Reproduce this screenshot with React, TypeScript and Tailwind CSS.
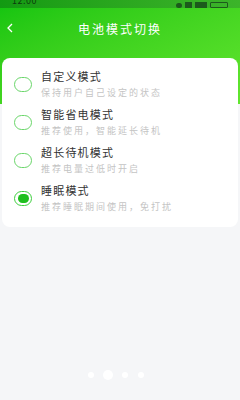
import React from 'react';

const modes = [
  { title: '自定义模式', desc: '保持用户自己设定的状态' },
  { title: '智能省电模式', desc: '推荐使用，智能延长待机' },
  { title: '超长待机模式', desc: '推荐电量过低时开启' },
  { title: '睡眠模式', desc: '推荐睡眠期间使用，免打扰' },
];

const Radio = ({ checked }: { checked: boolean }) => (
  <div
    className={`w-[18px] h-[15px] rounded-full flex items-center justify-center shrink-0 ${
      checked ? 'border-[1.5px] border-[#3fcf3f]' : 'border border-[#6ad66a]'
    }`}
  >
    {checked && <div className="w-[11px] h-[9px] rounded-full bg-[#1fbf1f]" />}
  </div>
);

export default function App() {
  const selected = 3;
  return (
    <div
      className="w-[240px] h-[400px] bg-[#f5f6f8] flex flex-col overflow-hidden"
      style={{ fontFamily: '"Noto Sans CJK SC", "Noto Sans", sans-serif' }}
    >
      {/* header */}
      <div className="h-[104px] bg-gradient-to-br from-[#0fc40f] to-[#62e62f] flex flex-col shrink-0">
        <div className="h-[8px] overflow-hidden bg-gradient-to-r from-[#129a12] to-[#3cb42a] flex justify-between px-[12px]">
          <span className="text-[9px] leading-[9px] -mt-[4px] text-[#0d3d0d] tracking-[0.5px]">12:00</span>
          <div className="flex items-end gap-[3px] -mt-[3px] text-[#0d3d0d]">
            <span className="w-[6px] h-[5px] rounded-full bg-[#1c5a1c]" />
            <span className="w-[7px] h-[6px] bg-[#1c5a1c]" />
            <span className="w-[12px] h-[6px] bg-[#1c5a1c]" />
            <span className="w-[18px] h-[6px] border border-[#1c5a1c] rounded-[1px]" />
          </div>
        </div>
        <div className="relative h-[40px] flex items-center justify-center">
          <svg className="absolute left-[6px] top-[15px]" width="8" height="10" viewBox="0 0 8 10">
            <path d="M6 1 L2 5 L6 9" fill="none" stroke="white" strokeWidth="1.3" />
          </svg>
          <span className="text-white text-[12px] tracking-[2px] mt-[1px]">电池模式切换</span>
        </div>
      </div>

      {/* card */}
      <div className="mx-[2px] -mt-[46px] bg-white rounded-[8px] pt-[7px] pb-[10px]">
        {modes.map((m, i) => (
          <div key={m.title} className="h-[38px] flex items-center pl-[12px] gap-[9px]">
            <Radio checked={i === selected} />
            <div className="flex flex-col gap-[2px]">
              <span className="text-[11px] leading-[15px] text-[#333] tracking-[1.2px]">{m.title}</span>
              <span className="text-[9px] leading-[13px] text-[#c4c4c4] tracking-[2px]">{m.desc}</span>
            </div>
          </div>
        ))}
      </div>

      {/* dots */}
      <div className="flex-1" />
      <div className="h-[30px] flex items-start justify-center pr-[8px] gap-[9px]">
        <span className="w-[6px] h-[6px] rounded-full bg-white mt-[2px]" />
        <span className="w-[10px] h-[10px] rounded-full bg-white" />
        <span className="w-[6px] h-[6px] rounded-full bg-white mt-[2px]" />
        <span className="w-[6px] h-[6px] rounded-full bg-white mt-[2px] ml-[1px]" />
      </div>
    </div>
  );
}
